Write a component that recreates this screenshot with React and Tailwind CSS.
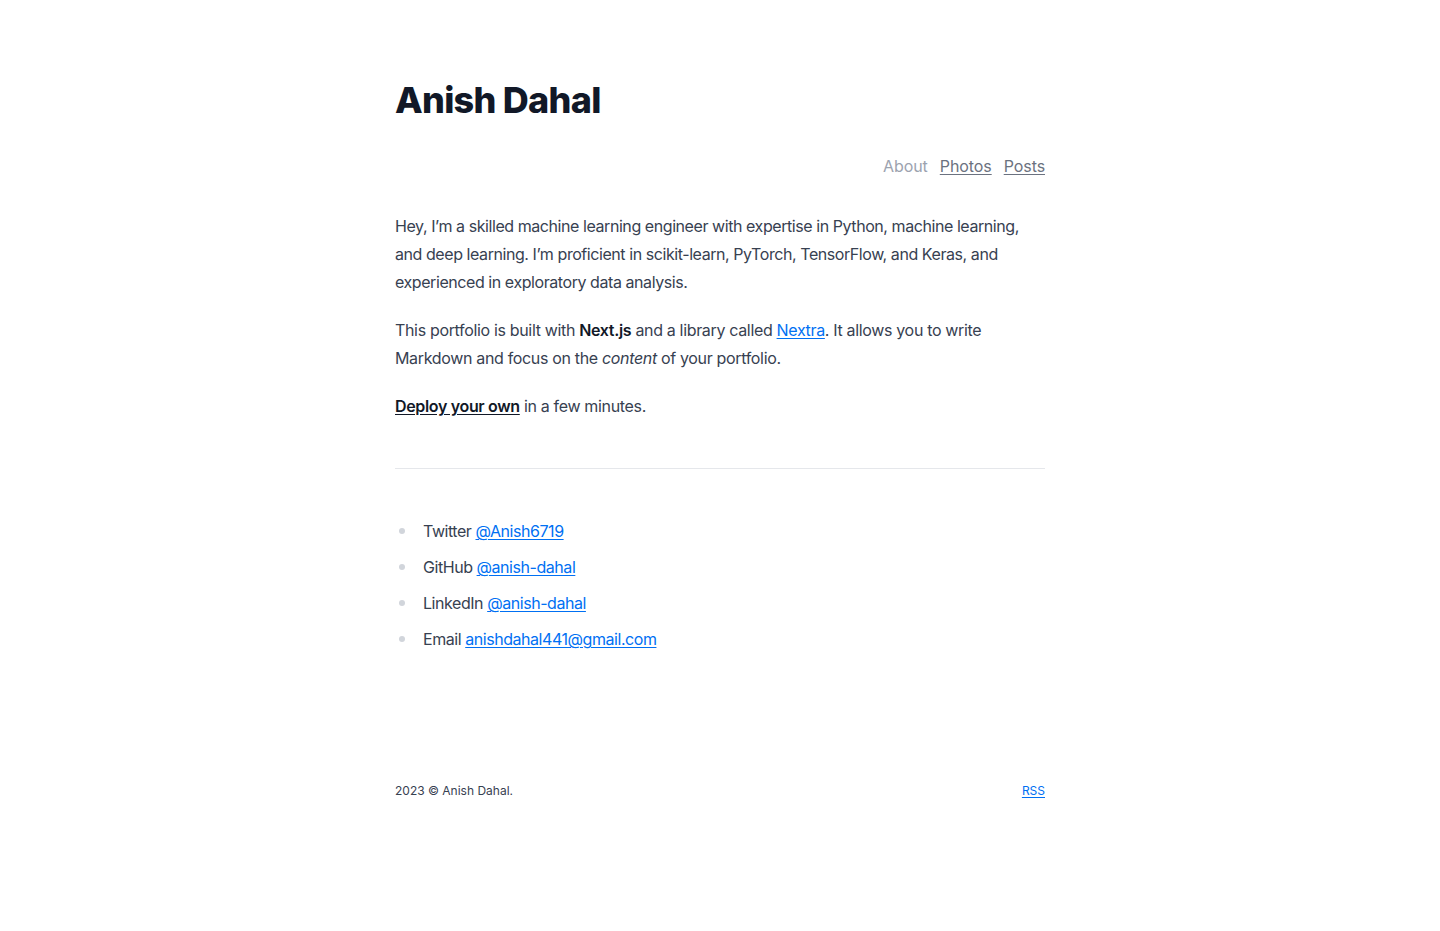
import React from 'react';

const links = [
    { label: 'Twitter', handle: '@Anish6719' },
    { label: 'GitHub', handle: '@anish-dahal' },
    { label: 'LinkedIn', handle: '@anish-dahal' },
    { label: 'Email', handle: 'anishdahal441@gmail.com' },
];

const A = ({ children }) => (
    <a href="#" className="text-[#0070f3] underline underline-offset-2 decoration-1">{children}</a>
);

export default function App() {
    return (
        <div className="min-h-screen bg-white font-['Inter',sans-serif] text-[#374151]">
            <div className="mx-auto w-[650px] pt-[80px] pb-16">
                {/* Header */}
                <h1 className="text-[36px] leading-[40px] font-extrabold tracking-[-0.02em] text-[#111827]">
                    Anish Dahal
                </h1>

                <nav className="mt-[34px] flex justify-end gap-3 text-base leading-6 tracking-[-0.005em]">
                    <span className="text-[#9ca3af]">About</span>
                    <a href="#" className="text-[#6b7280] underline underline-offset-2">Photos</a>
                    <a href="#" className="text-[#6b7280] underline underline-offset-2">Posts</a>
                </nav>

                {/* Content */}
                <div className="mt-[34px] text-base leading-7 tracking-[-0.021em]">
                    <p className="tracking-[-0.027em]">
                        Hey, I’m a skilled machine learning engineer with expertise in Python, machine learning,
                        and deep learning. I’m proficient in scikit-learn, PyTorch, TensorFlow, and Keras, and
                        experienced in exploratory data analysis.
                    </p>
                    <p className="mt-5">
                        This portfolio is built with <strong className="font-semibold text-[#111827]">Next.js</strong> and a library called <A>Nextra</A>. It allows you to write
                        Markdown and focus on the <em>content</em> of your portfolio.
                    </p>
                    <p className="mt-5">
                        <a href="#" className="font-semibold text-[#111827] underline underline-offset-2">Deploy your own</a> in a few minutes.
                    </p>

                    <hr className="mt-12 border-t border-[#e5e7eb]" />

                    <ul className="mt-12 space-y-2 tracking-[-0.028em]">
                        {links.map((l) => (
                            <li key={l.label} className="flex items-center">
                                <span className="ml-[4px] mr-[18px] w-[6px] h-[6px] rounded-full bg-[#d1d5db]"></span>
                                <span>{l.label}&nbsp;<A>{l.handle}</A></span>
                            </li>
                        ))}
                    </ul>
                </div>

                {/* Footer */}
                <footer className="mt-[130px] flex justify-between text-xs leading-4">
                    <span>2023 © Anish Dahal.</span>
                    <A>RSS</A>
                </footer>
            </div>
        </div>
    );
}
